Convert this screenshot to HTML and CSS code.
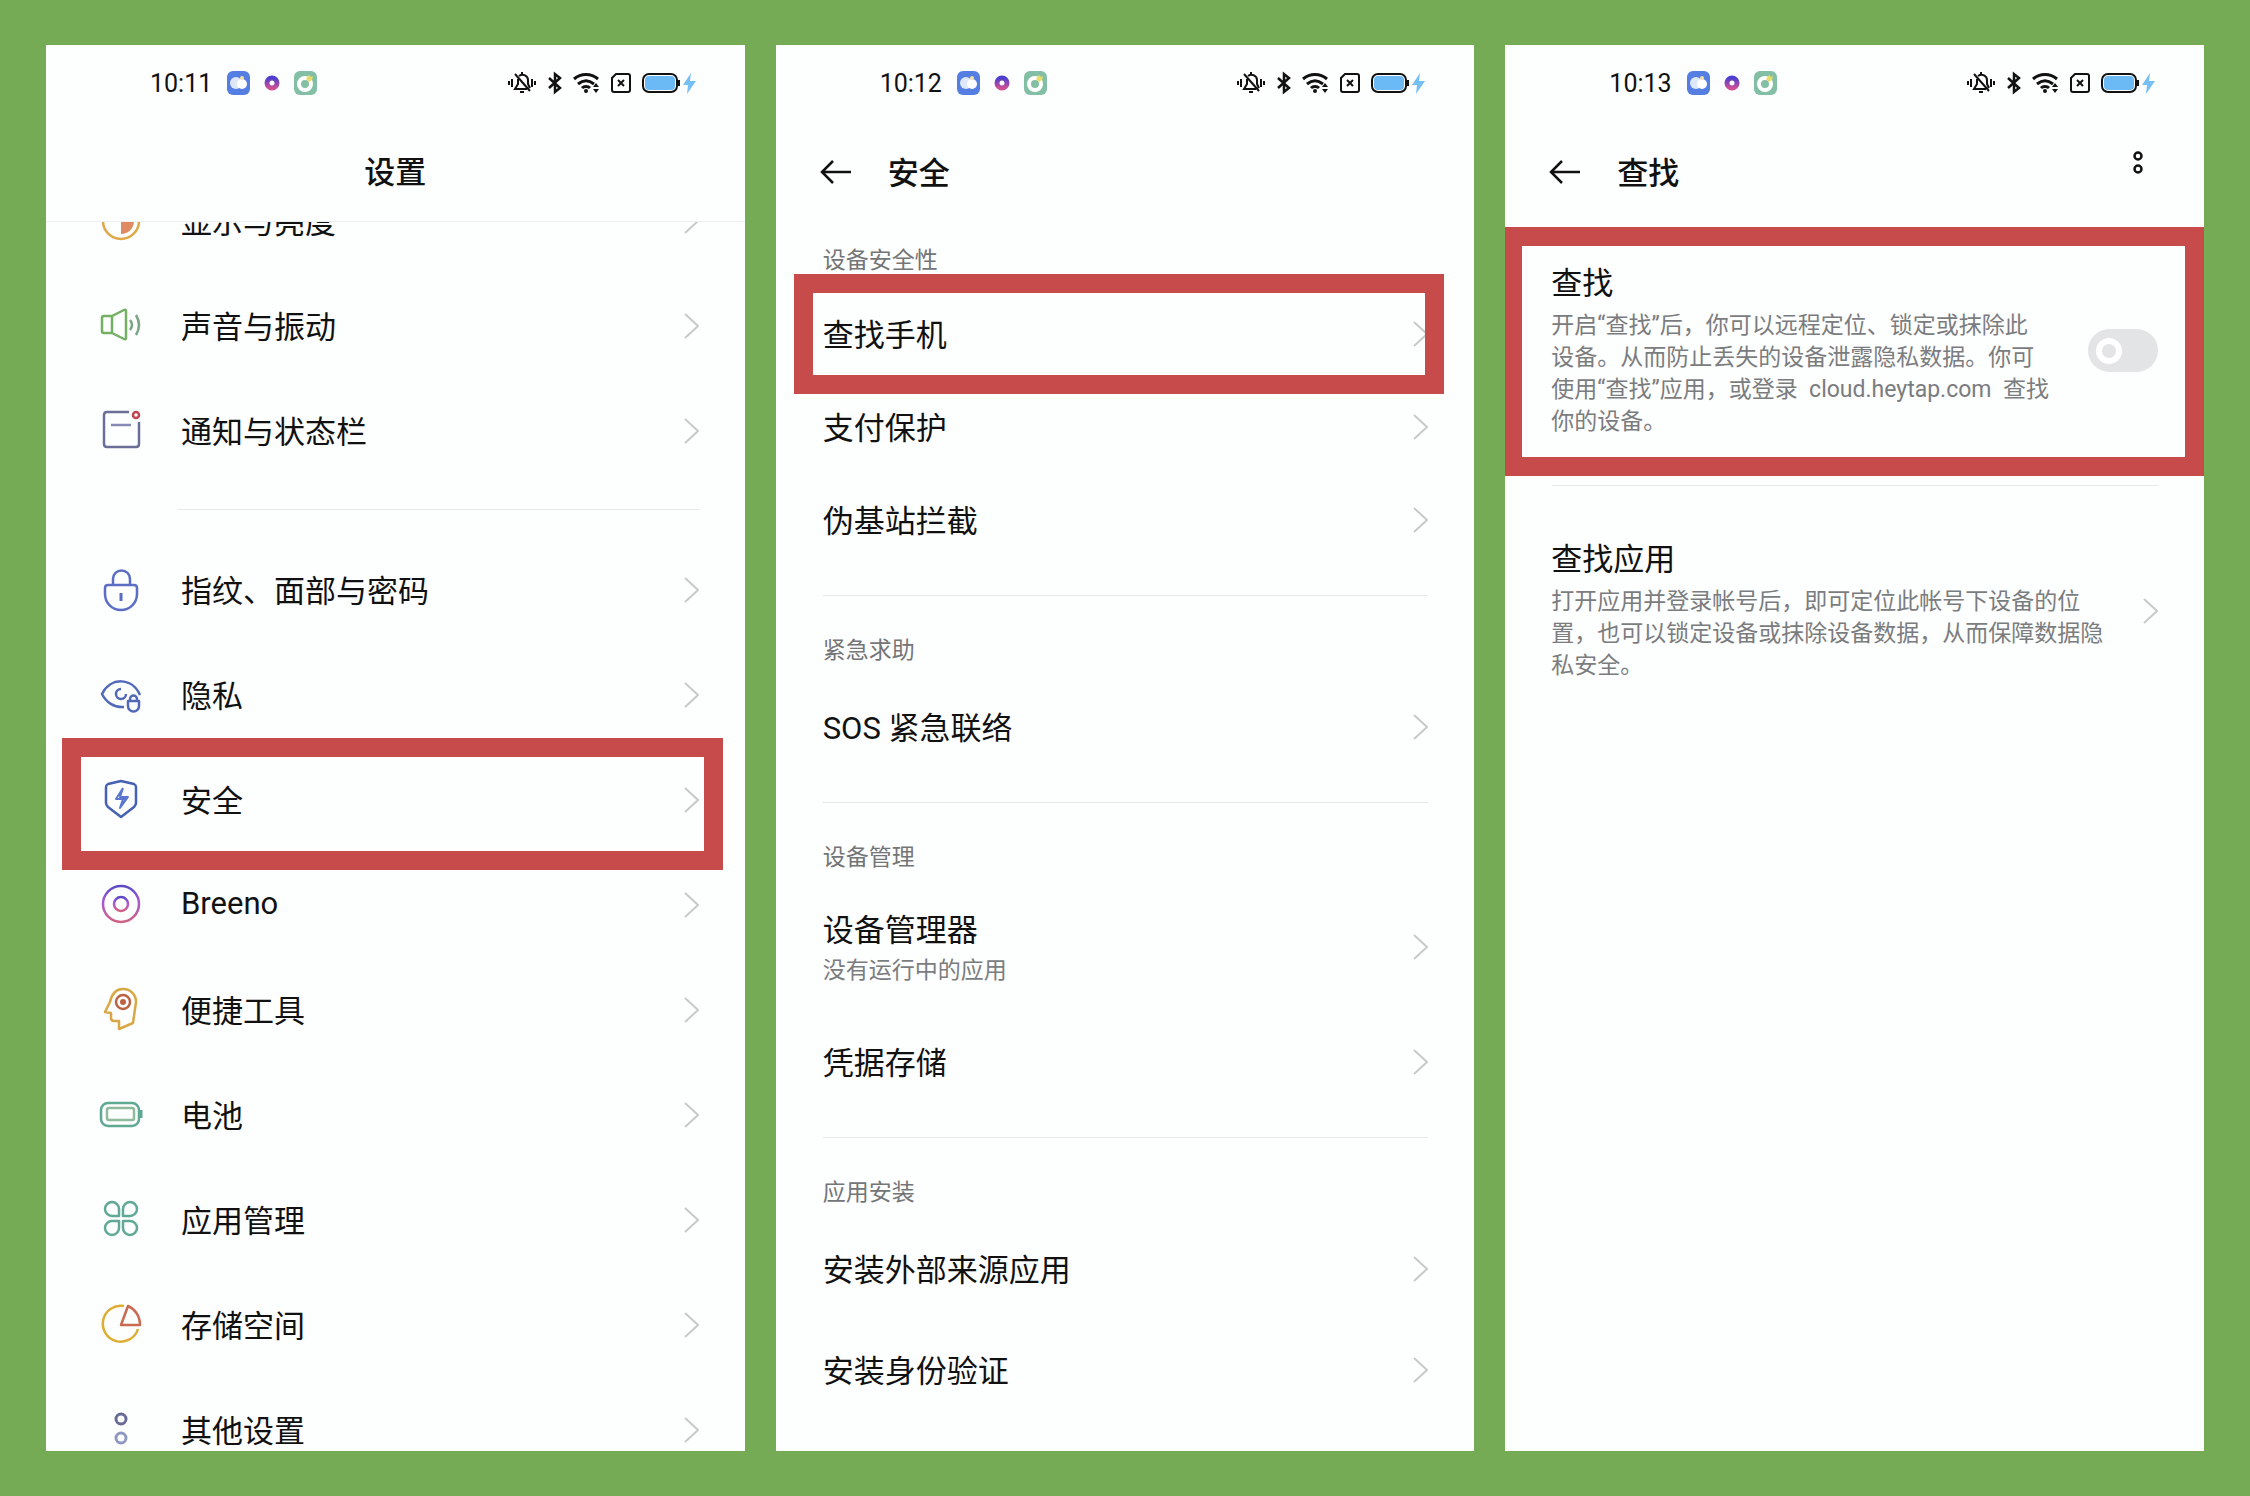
FILE: index.html
```html
<!DOCTYPE html>
<html lang="zh-CN">
<head>
    <meta charset="UTF-8">
    <title>查找手机设置</title>
    <link rel="stylesheet" href="styles.css">
</head>
<body>

<!-- shared icons -->
<svg class="sprite" aria-hidden="true">
    <defs>
        <linearGradient id="ring" x1="0" y1="0" x2="0" y2="1">
            <stop offset="0" stop-color="#5b49c4"/>
            <stop offset="0.4" stop-color="#a557d6"/>
            <stop offset="1" stop-color="#cf6285"/>
        </linearGradient>
        <linearGradient id="dot" x1="0" y1="0" x2="0" y2="1">
            <stop offset="0" stop-color="#4a3fd0"/>
            <stop offset="1" stop-color="#cf4f96"/>
        </linearGradient>
    </defs>
    <symbol id="apps" viewBox="0 0 90 24">
        <rect width="23" height="24" rx="6" fill="#557ee3"/>
        <circle cx="9" cy="12" r="6" fill="#dfe8fa"/>
        <circle cx="15" cy="13" r="5" fill="#fff"/>
        <circle cx="15" cy="7" r="2" fill="#f3dfa0"/>
        <circle cx="45" cy="12" r="5" fill="#fff" stroke="url(#dot)" stroke-width="5"/>
        <rect x="67" width="23" height="24" rx="6" fill="#83bfa5"/>
        <circle cx="78" cy="13" r="6" fill="none" stroke="#fff" stroke-width="4"/>
        <path d="M79 8l3-4 2 2 2-1-1 4-3 2z" fill="#e9dc6a"/>
    </symbol>
    <symbol id="mute" viewBox="0 0 30 24">
        <g fill="none" stroke="#111" stroke-width="2">
            <path d="M2 10v4M5 8v8M28 10v4M25 8v8"/>
            <path d="M8 3l15 17M11 8v5l-3 5h12M12 5c4-3 9 0 9 4v4l2 4"/>
            <path d="M13 21h4M15 1v2"/>
        </g>
    </symbol>
    <symbol id="bluetooth" viewBox="0 0 14 24">
        <path d="M1 7l11 10-5 4V3l5 4L1 17" fill="none" stroke="#111" stroke-width="2.5"/>
    </symbol>
    <symbol id="wifi" viewBox="0 0 27 24">
        <g fill="none" stroke="#111" stroke-width="3">
            <path d="M1 8c7-6 17-6 24 0M5 13c5-4 11-4 16 0M9 17c2-2 6-2 8 0"/>
        </g>
        <circle cx="13" cy="20" r="2" fill="#111"/>
        <path d="M20 16l3-4 3 4zM20 18h6l-3 4z" fill="#111"/>
    </symbol>
    <symbol id="nosim" viewBox="0 0 20 24">
        <path d="M5 3h12q2 0 2 2v14q0 2-2 2H3q-2 0-2-2V7z" fill="none" stroke="#111" stroke-width="2"/>
        <path d="M7 9l6 6M13 9l-6 6" stroke="#111" stroke-width="2"/>
    </symbol>
    <symbol id="charge" viewBox="0 0 55 24">
        <rect x="1" y="3" width="34" height="18" rx="6" fill="#fff" stroke="#111" stroke-width="2"/>
        <rect x="3" y="5" width="30" height="14" rx="4" fill="#6bb9f5"/>
        <path d="M37 9v6" stroke="#111" stroke-width="2"/>
        <path d="M49 2l-8 12h5l-1 9 9-13h-6z" fill="#76bff5"/>
    </symbol>
    <symbol id="chevron" viewBox="0 0 15 26">
        <path d="M1 1l13 12L1 25" fill="none" stroke="#c8c9cb" stroke-width="2"/>
    </symbol>
    <symbol id="arrow" viewBox="0 0 32 26">
        <path d="M31 13H2M13 2L2 13l11 11" fill="none" stroke="#111" stroke-width="2.5"/>
    </symbol>
</svg>

<main class="board">

    <section class="phone">
        <div class="status">
            <span class="time">10:11</span>
            <svg class="apps"><use href="#apps"/></svg>
            <div class="signals">
                <svg width="30" height="24"><use href="#mute"/></svg>
                <svg width="14" height="24"><use href="#bluetooth"/></svg>
                <svg width="27" height="24"><use href="#wifi"/></svg>
                <svg width="20" height="24"><use href="#nosim"/></svg>
                <svg width="55" height="24"><use href="#charge"/></svg>
            </div>
        </div>
        <header class="bar bar-center">
            <h1>设置</h1>
        </header>
        <nav class="list scrolled">
            <a class="row icon-row" href="#">
                <svg class="icon" viewBox="0 0 48 48">
                    <circle cx="24" cy="24" r="18" stroke="#dfa94a"/>
                    <path d="M24 11a13 13 0 0 1 0 26z" fill="#e08a62"/>
                </svg>
                <span class="name">显示与亮度</span>
                <svg class="chevron"><use href="#chevron"/></svg>
            </a>
            <a class="row icon-row" href="#">
                <svg class="icon" viewBox="0 0 48 48" stroke="#73b062">
                    <path d="M15 14H7q-2 0-2 2v13q0 2 2 2h8zM15 14l12-6q2-1 2 1v27q0 2-2 1l-12-6"/>
                    <path d="M33 18q4 5 0 10M39 13q6 10 0 20" stroke="#7aa583"/>
                </svg>
                <span class="name">声音与振动</span>
                <svg class="chevron"><use href="#chevron"/></svg>
            </a>
            <a class="row icon-row" href="#">
                <svg class="icon" viewBox="0 0 48 48" stroke="#6b6f98">
                    <path d="M32 5H10q-3 0-3 3v29q0 3 3 3h29q3 0 3-3V15"/>
                    <path d="M14 18h20" stroke="#8789b5"/>
                    <circle cx="39" cy="8" r="3" stroke="#bd4650"/>
                </svg>
                <span class="name">通知与状态栏</span>
                <svg class="chevron"><use href="#chevron"/></svg>
            </a>
            <hr class="indent">
            <a class="row icon-row" href="#">
                <svg class="icon" viewBox="0 0 48 48" stroke="#5b6ec4">
                    <path d="M11 19h26q3 0 3 3v6a16 16 0 0 1-32 0v-6q0-3 3-3z"/>
                    <path d="M16 19v-6a8 8 0 0 1 17 0v6"/>
                    <path d="M24 27v8" stroke-width="3"/>
                </svg>
                <span class="name">指纹、面部与密码</span>
                <svg class="chevron"><use href="#chevron"/></svg>
            </a>
            <a class="row icon-row" href="#">
                <svg class="icon" viewBox="0 0 48 48" stroke="#5269b8">
                    <path d="M27 36C17 37 9 31 5 23c8-17 30-17 38 1"/>
                    <path d="M24 18a5 5 0 1 0 5 5"/>
                    <path d="M31 30h11v5a5.500 5.500 0 0 1-11 0zM33 30v-2a3 3 0 0 1 7 0v2"/>
                </svg>
                <span class="name">隐私</span>
                <svg class="chevron"><use href="#chevron"/></svg>
            </a>
            <a class="row icon-row marked marked-security" href="#">
                <svg class="icon" viewBox="0 0 48 48" stroke="#4660b3">
                    <path d="M24 5l13 3q2 1 2 3v16q0 2-2 4L24 41 11 31q-2-2-2-4V11q0-2 2-3z"/>
                    <path d="M26 12l-7 11h10l-6 9M26 12l-3 9h8l-8 11 3-9" stroke="#5b76cf" stroke-width="2"/>
                </svg>
                <span class="name">安全</span>
                <svg class="chevron"><use href="#chevron"/></svg>
            </a>
            <a class="row icon-row" href="#">
                <svg class="icon" viewBox="0 0 48 48" stroke="url(#ring)">
                    <circle cx="24" cy="23" r="18"/>
                    <circle cx="24" cy="23" r="7"/>
                </svg>
                <span class="name">Breeno</span>
                <svg class="chevron"><use href="#chevron"/></svg>
            </a>
            <a class="row icon-row" href="#">
                <svg class="icon" viewBox="0 0 48 48" stroke="#d8a845">
                    <path d="M8 26l5-10C15 7 20 3 26 3c8 0 13 6 13 13l-3 21-14 6v-8h-5q-3 0-3-3v-5z"/>
                    <circle cx="26" cy="16" r="7" stroke="#bd6344"/>
                    <circle cx="26" cy="16" r="3" stroke="none" fill="#bd6344"/>
                </svg>
                <span class="name">便捷工具</span>
                <svg class="chevron"><use href="#chevron"/></svg>
            </a>
            <a class="row icon-row" href="#">
                <svg class="icon" viewBox="0 0 48 48" stroke="#5fa892">
                    <rect x="4" y="12" width="38" height="23" rx="7"/>
                    <rect x="10" y="17" width="27" height="12" rx="2" stroke="#8fba9c"/>
                    <path d="M44 19v8" stroke-width="3"/>
                </svg>
                <span class="name">电池</span>
                <svg class="chevron"><use href="#chevron"/></svg>
            </a>
            <a class="row icon-row" href="#">
                <svg class="icon" viewBox="0 0 48 48" stroke="#5fa996">
                    <path d="M22 20h-7a7 7 0 1 1 7-7zM26 20h7a7 7 0 1 0-7-7zM22 25h-7a7 7 0 1 0 7 7zM26 25h7a7 7 0 1 1-7 7z"/>
                </svg>
                <span class="name">应用管理</span>
                <svg class="chevron"><use href="#chevron"/></svg>
            </a>
            <a class="row icon-row" href="#">
                <svg class="icon" viewBox="0 0 48 48" stroke="#dcae34">
                    <path d="M27 5a18 18 0 1 0 14 23"/>
                    <path d="M24 24l7-19c7 3 12 10 12 19z" stroke="#c96a52"/>
                </svg>
                <span class="name">存储空间</span>
                <svg class="chevron"><use href="#chevron"/></svg>
            </a>
            <a class="row icon-row" href="#">
                <svg class="icon" viewBox="0 0 48 48">
                    <circle cx="24" cy="13" r="5" stroke="#686b94" stroke-width="3"/>
                    <circle cx="24" cy="32" r="5" stroke="#8f98c0" stroke-width="3"/>
                </svg>
                <span class="name">其他设置</span>
                <svg class="chevron"><use href="#chevron"/></svg>
            </a>
        </nav>
    </section>

    <section class="phone">
        <div class="status">
            <span class="time">10:12</span>
            <svg class="apps"><use href="#apps"/></svg>
            <div class="signals">
                <svg width="30" height="24"><use href="#mute"/></svg>
                <svg width="14" height="24"><use href="#bluetooth"/></svg>
                <svg width="27" height="24"><use href="#wifi"/></svg>
                <svg width="20" height="24"><use href="#nosim"/></svg>
                <svg width="55" height="24"><use href="#charge"/></svg>
            </div>
        </div>
        <header class="bar">
            <button class="back" aria-label="返回"><svg width="32" height="26"><use href="#arrow"/></svg></button>
            <h1>安全</h1>
        </header>
        <nav class="list">
            <h2 class="first">设备安全性</h2>
            <a class="row marked marked-find" href="#">
                <span class="name">查找手机</span>
                <svg class="chevron"><use href="#chevron"/></svg>
            </a>
            <a class="row" href="#">
                <span class="name">支付保护</span>
                <svg class="chevron"><use href="#chevron"/></svg>
            </a>
            <a class="row" href="#">
                <span class="name">伪基站拦截</span>
                <svg class="chevron"><use href="#chevron"/></svg>
            </a>
            <hr>
            <h2>紧急求助</h2>
            <a class="row" href="#">
                <span class="name">SOS 紧急联络</span>
                <svg class="chevron"><use href="#chevron"/></svg>
            </a>
            <hr>
            <h2>设备管理</h2>
            <a class="row tall" href="#">
                <span class="name">设备管理器<small>没有运行中的应用</small></span>
                <svg class="chevron"><use href="#chevron"/></svg>
            </a>
            <a class="row" href="#">
                <span class="name">凭据存储</span>
                <svg class="chevron"><use href="#chevron"/></svg>
            </a>
            <hr>
            <h2>应用安装</h2>
            <div class="loose">
                <a class="row" href="#">
                    <span class="name">安装外部来源应用</span>
                    <svg class="chevron"><use href="#chevron"/></svg>
                </a>
                <a class="row" href="#">
                    <span class="name">安装身份验证</span>
                    <svg class="chevron"><use href="#chevron"/></svg>
                </a>
            </div>
        </nav>
    </section>

    <section class="phone">
        <div class="status">
            <span class="time">10:13</span>
            <svg class="apps"><use href="#apps"/></svg>
            <div class="signals">
                <svg width="30" height="24"><use href="#mute"/></svg>
                <svg width="14" height="24"><use href="#bluetooth"/></svg>
                <svg width="27" height="24"><use href="#wifi"/></svg>
                <svg width="20" height="24"><use href="#nosim"/></svg>
                <svg width="55" height="24"><use href="#charge"/></svg>
            </div>
        </div>
        <header class="bar">
            <button class="back" aria-label="返回"><svg width="32" height="26"><use href="#arrow"/></svg></button>
            <h1>查找</h1>
            <button class="more" aria-label="更多">
                <svg width="10" height="24" fill="none" stroke="#111" stroke-width="2.5">
                    <circle cx="5" cy="5" r="3.500"/>
                    <circle cx="5" cy="18" r="3.500"/>
                </svg>
            </button>
        </header>
        <div class="find-card">
            <label class="about" for="find">
                <span class="title">查找</span>
                <span class="desc">开启“查找”后，你可以远程定位、锁定或抹除此<br>设备。从而防止丢失的设备泄露隐私数据。你可<br>使用“查找”应用，或登录&nbsp; cloud.heytap.com &nbsp;查找<br>你的设备。</span>
            </label>
            <input class="switch" type="checkbox" id="find">
        </div>
        <hr class="close">
        <a class="find-app" href="#">
            <span class="about">
                <span class="title">查找应用</span>
                <span class="desc">打开应用并登录帐号后，即可定位此帐号下设备的位<br>置，也可以锁定设备或抹除设备数据，从而保障数据隐<br>私安全。</span>
            </span>
            <svg class="chevron"><use href="#chevron"/></svg>
        </a>
    </section>

</main>
</body>
</html>
```
FILE: styles.css
```css
*,
*::before,
*::after {
    box-sizing: border-box;
}

body {
    margin: 0;
    background: #74ab54;
    color: #111;
    font-family: Roboto, "Noto Sans CJK SC", sans-serif;
    font-size: 31px;
}

a {
    color: inherit;
    text-decoration: none;
}

button {
    padding: 0;
    border: 0;
    background: none;
    cursor: pointer;
}

svg {
    display: block;
    flex-shrink: 0;
}

.sprite {
    position: absolute;
    width: 0;
    height: 0;
}

.board {
    display: grid;
    grid-template-columns: repeat(3, 1fr);
    gap: 31px;
    height: 100vh;
    padding: 45px 46px;
}

.phone {
    display: flex;
    flex-direction: column;
    min-width: 0;
    background: #fdfefe;
    overflow: hidden;
}

/* status bar */
.status {
    display: flex;
    align-items: center;
    flex-shrink: 0;
    height: 76px;
    padding: 0 48px 0 104px;
}

.time {
    font-size: 25px;
}

.apps {
    width: 90px;
    height: 24px;
    margin-left: 15px;
}

.signals {
    display: flex;
    gap: 11px;
    margin-left: auto;
}

/* title bar */
.bar {
    display: flex;
    align-items: center;
    flex-shrink: 0;
    height: 101px;
    padding: 0 46px 0 44px;
}

.bar-center {
    justify-content: center;
    padding: 0;
    border-bottom: 1px solid #eef0f0;
}

.bar h1 {
    margin: 0;
    padding-bottom: 3px;
    font-size: 31px;
    font-weight: 500;
}

.back {
    margin-right: 36px;
}

.more {
    align-self: flex-start;
    margin: 30px 15px 0 auto;
}

/* lists */
.list {
    flex: 1;
    min-height: 0;
    overflow: hidden;
}

.scrolled .row:first-child {
    margin-top: -54px;
}

.row {
    position: relative;
    display: flex;
    align-items: center;
    height: 93px;
    padding: 0 46px 0 47px;
}

.icon-row {
    height: 105px;
    padding-left: 51px;
}

.tall {
    height: 128px;
    padding-bottom: 8px;
}

.icon {
    width: 48px;
    height: 48px;
    margin-right: 36px;
    fill: none;
    stroke-width: 2.5;
    stroke-linejoin: round;
}

.name {
    flex: 1;
    padding-bottom: 3px;
}

.name small {
    display: block;
    margin-top: 5px;
    color: #7b7c7e;
    font-size: 23px;
    line-height: 32px;
}

.chevron {
    width: 15px;
    height: 26px;
}

.loose {
    display: grid;
    gap: 8px;
}

hr {
    margin: 29px 46px 0 47px;
    border: 0;
    border-top: 1px solid #e6e9e9;
}

hr.indent {
    margin: 26px 46px 27px 132px;
}

hr.close {
    width: auto;
    margin-top: 9px;
}

h2 {
    margin: 39px 47px 13px;
    color: #747577;
    font-size: 23px;
    font-weight: 400;
    line-height: 32px;
}

h2.first {
    margin-top: 23px;
    margin-bottom: 10px;
}

/* red frames */
.marked::after {
    content: "";
    position: absolute;
    border: 19px solid #c64b4a;
}

.marked-security::after {
    inset: -9px 22px -18px 16px;
}

.marked-find::after {
    inset: -13px 30px -14px 18px;
}

.find-card {
    display: flex;
    align-items: center;
    justify-content: space-between;
    margin-top: 5px;
    padding: 17px 27px 19px 29px;
    border: 19px solid #c64b4a;
    border-left-width: 17px;
}

.find-app {
    display: flex;
    align-items: center;
    justify-content: space-between;
    padding: 53px 46px;
}

.title {
    display: block;
    margin-bottom: 5px;
    line-height: 42px;
}

.desc {
    display: block;
    color: #7b7c7e;
    font-size: 23px;
    line-height: 32px;
    white-space: nowrap;
}

.switch {
    display: flex;
    align-items: center;
    flex-shrink: 0;
    width: 70px;
    height: 43px;
    margin: 0;
    padding-left: 8px;
    border-radius: 22px;
    background: #e3e4e5;
    appearance: none;
    cursor: pointer;
}

.switch::before {
    content: "";
    width: 26px;
    height: 26px;
    border: 6px solid #fff;
    border-radius: 50%;
}

.switch:checked {
    justify-content: flex-end;
    padding: 0 8px 0 0;
    background: #5b9df5;
}
```
